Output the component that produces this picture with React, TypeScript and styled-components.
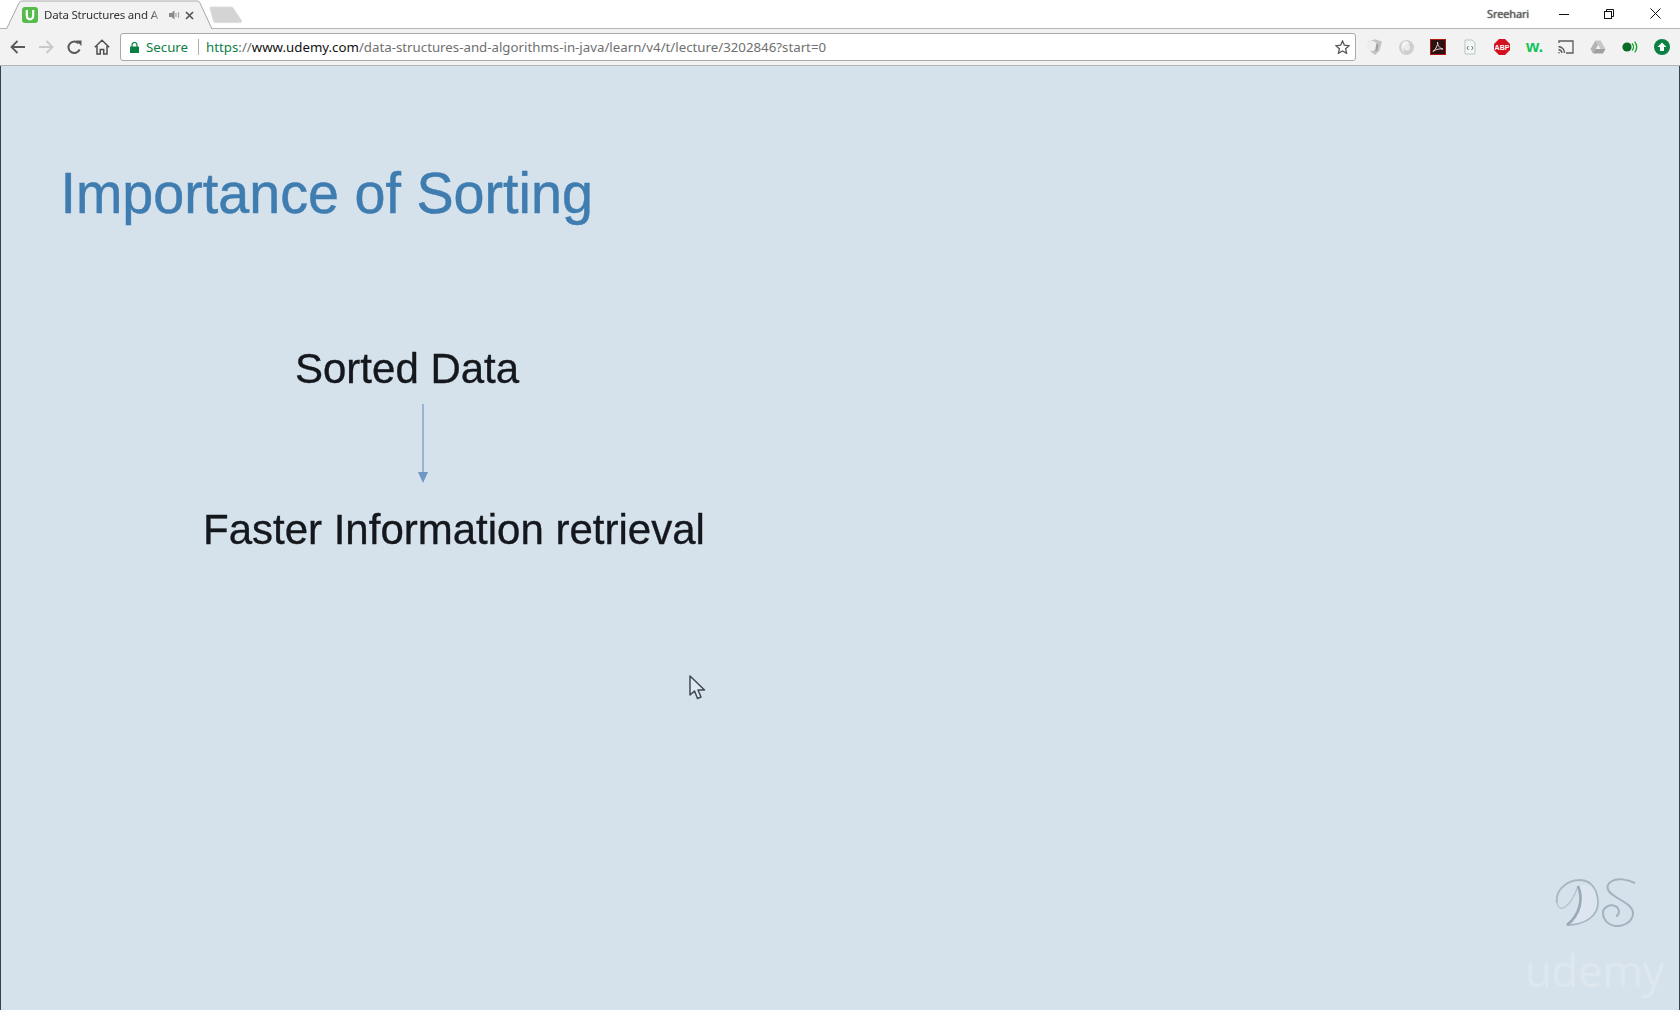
import React from "react";
import styled, { createGlobalStyle } from "styled-components";

const Global = createGlobalStyle`
  html, body { margin: 0; padding: 0; height: 100%; overflow: hidden; background: #d6e2eb; }
  #root { height: 100%; }
`;

const Page = styled.div`
  width: 1680px;
  height: 1010px;
  display: flex;
  flex-direction: column;
  font-family: "Noto Sans", "Open Sans", sans-serif;
`;

const TitleBar = styled.header`
  height: 28px;
  flex: none;
  background: #fff;
  border-bottom: 1px solid #b4b4b4;
  display: flex;
  align-items: flex-start;
  box-sizing: content-box;
  position: relative;
`;

const Tab = styled.div`
  width: 208px;
  height: 29px;
  margin-left: 5px;
  position: relative;
  display: flex;
  align-items: center;
  padding: 1px 0 0 17px;
  box-sizing: border-box;
  flex: none;
  z-index: 1;
`;

const TabShape = styled.svg`
  position: absolute;
  left: 0;
  top: 0;
`;

const Favicon = styled.svg`
  position: relative;
  flex: none;
`;

const TabTitle = styled.span`
  position: relative;
  width: 120px;
  margin-left: 6px;
  font-size: 11.5px;
  letter-spacing: -0.2px;
  line-height: 16px;
  white-space: nowrap;
  color: #333;
  -webkit-mask-image: linear-gradient(to right, #000 88%, transparent 100%);
  mask-image: linear-gradient(to right, #000 88%, transparent 100%);
`;

const TabIcon = styled.svg<{ $gap: number }>`
  position: relative;
  flex: none;
  margin-left: ${(p) => p.$gap}px;
`;

const NewTab = styled.svg`
  flex: none;
  margin: 6px 0 0 -4px;
`;

const Spacer = styled.div`
  flex: 1;
`;

const UserName = styled.span`
  font-size: 11px;
  line-height: 28px;
  color: #6a6a6a;
  letter-spacing: -0.15px;
  text-shadow: 0 0 1px #333;
  margin-right: 12px;
`;

const WindowButtons = styled.div`
  display: flex;
  height: 27px;
`;

const WindowButton = styled.div<{ $wide?: boolean }>`
  width: ${(p) => (p.$wide ? 49 : 45)}px;
  height: 27px;
  display: flex;
  align-items: center;
  justify-content: center;
`;

const Toolbar = styled.nav`
  height: 36px;
  flex: none;
  background: #f2f2f2;
  border-bottom: 1px solid #b4b4b4;
  display: flex;
  align-items: center;
`;

const NavGroup = styled.div`
  display: flex;
  width: 120px;
  flex: none;
  padding-left: 4px;
  box-sizing: border-box;
`;

const NavButton = styled.div`
  width: 28px;
  height: 28px;
  display: flex;
  align-items: center;
  justify-content: center;
`;

const Omnibox = styled.div`
  width: 1236px;
  height: 28px;
  flex: none;
  box-sizing: border-box;
  background: #fff;
  border: 1px solid #a9a9a9;
  border-radius: 3px;
  display: flex;
  align-items: center;
  padding: 0 5px 0 9px;
  font-size: 13.28px;
`;

const SecureLabel = styled.span`
  color: #0b8043;
  margin-left: 7px;
  line-height: 26px;
`;

const Divider = styled.span`
  width: 1px;
  height: 16px;
  background: #b0b0b0;
  margin: 0 7px 0 10px;
  flex: none;
`;

const Url = styled.div`
  flex: 1;
  white-space: nowrap;
  color: #707070;
`;

const UrlScheme = styled.span`
  color: #0b8043;
`;

const UrlHost = styled.span`
  color: #111;
`;

const Extensions = styled.div`
  display: flex;
  flex: none;
  margin-left: 2px;
`;

const ExtButton = styled.div`
  width: 32px;
  height: 28px;
  display: flex;
  align-items: center;
  justify-content: center;
`;

const Slide = styled.main`
  flex: 1;
  position: relative;
  background: #d6e2eb;
  border-left: 1px solid #39424a;
  border-right: 1px solid #39424a;
  overflow: hidden;
  font-family: "Liberation Sans", Arial, sans-serif;
  filter: blur(0.35px);
`;

const SlideTitle = styled.h1`
  margin: 0;
  padding: 92px 0 0 62px;
  font-size: 58px;
  line-height: 70px;
  font-weight: 400;
  color: #3f7cb0;
  white-space: nowrap;
  transform: scaleX(0.96);
  transform-origin: 0 0;
  -webkit-text-stroke: 0.5px #3f7cb0;
`;

const Diagram = styled.section`
  display: flex;
  flex-direction: column;
  margin-top: 116px;
`;

const SortedLabel = styled.div`
  margin-left: 294px;
  font-size: 42px;
  line-height: 50px;
  color: #14181d;
  white-space: nowrap;
  -webkit-text-stroke: 0.35px #14181d;
`;

const Arrow = styled.svg`
  display: block;
  margin: 10px 0 0 416px;
`;

const RetrievalLabel = styled.div`
  margin: 21px 0 0 202px;
  font-size: 42px;
  line-height: 52px;
  color: #14181d;
  white-space: nowrap;
  -webkit-text-stroke: 0.35px #14181d;
`;

const Cursor = styled.svg`
  position: absolute;
  left: 686px;
  top: 608px;
`;

const Watermark = styled.div`
  position: absolute;
  right: 15px;
  bottom: 12px;
  width: 142px;
  display: flex;
  flex-direction: column;
  align-items: flex-end;
`;

const DsLogo = styled.svg`
  display: block;
  margin: 0 25px 14px 0;
`;

const UdemyMark = styled.div`
  font-family: "Open Sans", sans-serif;
  font-size: 44px;
  line-height: 56px;
  color: #dfe7ee;
  letter-spacing: -0.5px;
`;

const AbpText = styled.text`
  font-family: "Liberation Sans", sans-serif;
  font-size: 7px;
  font-weight: 700;
  fill: #fff;
`;

const WText = styled.text`
  font-family: "Liberation Sans", sans-serif;
  font-size: 17px;
  font-weight: 700;
  fill: #10c45a;
`;

const Extension = ({ kind }: { kind: string }) => {
  switch (kind) {
    case "shield":
      return (
        <svg width="18" height="18" viewBox="0 0 16 16">
          <path d="M3 3 L9 1 L15 3 L13 11 L9 15 L5 12 Z" fill="#c4c4c4" />
          <circle cx="6" cy="7" r="4.6" fill="#eeeeee" />
          <path d="M10 5 L12 6 L11 11 L9 12 Z" fill="#a0a0a0" />
        </svg>
      );
    case "swirl":
      return (
        <svg width="17" height="17" viewBox="0 0 17 17">
          <circle cx="8.5" cy="8.5" r="7.5" fill="#cfcfcf" />
          <path d="M8 2 C3 3 2 9 6 14 C4 8 7 5 12 5 C10.5 3.5 9.5 2.5 8 2 Z" fill="#f4f4f4" />
          <circle cx="9" cy="8.5" r="3" fill="#ececec" />
        </svg>
      );
    case "pdf":
      return (
        <svg width="16" height="16" viewBox="0 0 16 16">
          <rect x="0.5" y="0.5" width="15" height="15" fill="#2a1212" stroke="#b3180f" />
          <path d="M3 12.5 C6 10 8 6 7.6 3 C7.4 6 9.5 9.5 13 10 C10 9.6 6 10 3 12.5 Z" fill="none" stroke="#e9d5d2" strokeWidth="1" />
        </svg>
      );
    case "doc":
      return (
        <svg width="14" height="16" viewBox="0 0 14 16">
          <path d="M2 1 H9 L12 4 V15 H2 Z" fill="#f3f6f6" stroke="#b9c4c4" />
          <path d="M5.5 7 L4 9 L5.5 11 M8.5 7 L10 9 L8.5 11" fill="none" stroke="#6b7a7a" />
        </svg>
      );
    case "abp":
      return (
        <svg width="16" height="16" viewBox="0 0 16 16">
          <path d="M5 0 H11 L16 5 V11 L11 16 H5 L0 11 V5 Z" fill="#d3101f" />
          <AbpText x="8" y="10.6" textAnchor="middle">ABP</AbpText>
        </svg>
      );
    case "w":
      return (
        <svg width="26" height="20" viewBox="0 0 26 20">
          <WText x="5" y="15">w.</WText>
        </svg>
      );
    case "cast":
      return (
        <svg width="16" height="14" viewBox="0 0 16 14" fill="none" stroke="#5c5c5c" strokeWidth="1.3">
          <path d="M1 3 V1 H15 V13 H8" />
          <path d="M0.5 6.5 A7 7 0 0 1 6.5 13" />
          <path d="M0.5 9.5 A4 4 0 0 1 4 13" />
          <circle cx="1" cy="12.8" r="0.8" fill="#5c5c5c" stroke="none" />
        </svg>
      );
    case "drive":
      return (
        <svg width="16" height="14" viewBox="0 0 16 14">
          <path d="M5.5 0.5 H10.5 L15.5 9 H10.5 Z" fill="#c6c6c6" />
          <path d="M5.5 0.5 L8 5 L3 13.5 L0.5 9 Z" fill="#b3b3b3" />
          <path d="M5.5 9 H15.5 L13 13.5 H3 Z" fill="#a0a0a0" />
        </svg>
      );
    case "signal":
      return (
        <svg width="16" height="14" viewBox="0 0 16 14" fill="none">
          <circle cx="5" cy="7" r="4.6" fill="#0a6b27" />
          <path d="M10 3.5 A5 5 0 0 1 10 10.5" stroke="#15a52f" strokeWidth="1.4" />
          <path d="M12.6 1.6 A8 8 0 0 1 12.6 12.4" stroke="#15a52f" strokeWidth="1.4" />
        </svg>
      );
    default:
      return (
        <svg width="16" height="16" viewBox="0 0 16 16">
          <circle cx="8" cy="8" r="8" fill="#0b8043" />
          <path d="M8 3.5 L12.5 8 H10 V12 H6 V8 H3.5 Z" fill="#fff" />
        </svg>
      );
  }
};

const extensionKinds = ["shield", "swirl", "pdf", "doc", "abp", "w", "cast", "drive", "signal", "up"];

export default function App() {
  return (
    <Page>
      <Global />
      <TitleBar>
        <Tab>
          <TabShape width="208" height="29" viewBox="0 0 208 29">
            <path d="M1.5 29 L14 3 Q15 1 17 1 H192 Q194 1 195 3 L207 29" fill="#f2f2f2" stroke="#a8a8a8" />
          </TabShape>
          <Favicon width="16" height="16" viewBox="0 0 16 16">
            <rect width="16" height="16" rx="3" fill="#55bb4a" />
            <path d="M4.8 3 V8.6 C4.8 11 6.2 12.3 8 12.3 C9.8 12.3 11.2 11 11.2 8.6 V3" fill="none" stroke="#fff" strokeWidth="2.2" />
          </Favicon>
          <TabTitle>Data Structures and A</TabTitle>
          <TabIcon $gap={5} width="11" height="10" viewBox="0 0 11 10">
            <path d="M0 3 H2.5 L5.5 0.5 V9.5 L2.5 7 H0 Z" fill="#8a8a8a" />
            <path d="M7 3 V7 M9.5 2 V8" stroke="#a5a5a5" strokeWidth="1.2" />
          </TabIcon>
          <TabIcon $gap={5} width="9" height="9" viewBox="0 0 9 9">
            <path d="M1 1 L8 8 M8 1 L1 8" stroke="#555" strokeWidth="1.7" />
          </TabIcon>
        </Tab>
        <NewTab width="34" height="19" viewBox="0 0 36 19">
          <path d="M1 1.5 Q1 0.5 2 0.5 H24 Q25 0.5 25.5 1.5 L34.5 15 Q35 17 33 17 H7 Q5.5 17 5 16 Z" fill="#d4d4d4" stroke="#dcdcdc" />
        </NewTab>
        <Spacer />
        <UserName>Sreehari</UserName>
        <WindowButtons>
          <WindowButton>
            <svg width="10" height="10" viewBox="0 0 10 10"><path d="M0 5.5 H10" stroke="#111" /></svg>
          </WindowButton>
          <WindowButton>
            <svg width="10" height="10" viewBox="0 0 10 10" fill="none" stroke="#111">
              <rect x="0.5" y="2.5" width="7" height="7" />
              <path d="M2.5 2.5 V0.5 H9.5 V7.5 H7.5" />
            </svg>
          </WindowButton>
          <WindowButton $wide>
            <svg width="11" height="11" viewBox="0 0 11 11"><path d="M0.5 0.5 L10.5 10.5 M10.5 0.5 L0.5 10.5" stroke="#111" /></svg>
          </WindowButton>
        </WindowButtons>
      </TitleBar>
      <Toolbar>
        <NavGroup>
          <NavButton>
            <svg width="16" height="14" viewBox="0 0 16 14" fill="none" stroke="#5a5a5a" strokeWidth="1.8">
              <path d="M15 7 H2 M7.5 1 L1.5 7 L7.5 13" />
            </svg>
          </NavButton>
          <NavButton>
            <svg width="16" height="14" viewBox="0 0 16 14" fill="none" stroke="#c8c8c8" strokeWidth="1.8">
              <path d="M1 7 H14 M8.5 1 L14.5 7 L8.5 13" />
            </svg>
          </NavButton>
          <NavButton>
            <svg width="15" height="15" viewBox="0 0 15 15" fill="none">
              <path d="M12.6 9.5 A5.8 5.8 0 1 1 11.6 3.4" stroke="#5a5a5a" strokeWidth="2" />
              <path d="M9 0.5 H14.5 V6 Z" fill="#5a5a5a" />
            </svg>
          </NavButton>
          <NavButton>
            <svg width="16" height="16" viewBox="0 0 16 16" fill="none" stroke="#4e4e4e" strokeWidth="1.5">
              <path d="M0.8 8.2 L8 1.2 L15.2 8.2 M3 7 V15 H6.3 V10.5 H9.7 V15 H13 V7" />
            </svg>
          </NavButton>
        </NavGroup>
        <Omnibox>
          <svg width="9" height="11" viewBox="0 0 9 11">
            <rect y="4.5" width="9" height="6.5" rx="0.5" fill="#0b8043" />
            <path d="M2 5 V3 A2.5 2.5 0 0 1 7 3 V5" fill="none" stroke="#0b8043" strokeWidth="1.2" />
          </svg>
          <SecureLabel>Secure</SecureLabel>
          <Divider />
          <Url>
            <UrlScheme>https</UrlScheme>://<UrlHost>www.udemy.com</UrlHost>/data-structures-and-algorithms-in-java/learn/v4/t/lecture/3202846?start=0
          </Url>
          <svg width="15" height="14" viewBox="0 0 15 14">
            <path d="M7.5 1 L9.4 5.2 L14 5.7 L10.6 8.8 L11.6 13.3 L7.5 11 L3.4 13.3 L4.4 8.8 L1 5.7 L5.6 5.2 Z" fill="none" stroke="#555" strokeWidth="1.3" />
          </svg>
        </Omnibox>
        <Extensions>
          {extensionKinds.map((k) => (
            <ExtButton key={k}>
              <Extension kind={k} />
            </ExtButton>
          ))}
        </Extensions>
      </Toolbar>
      <Slide>
        <SlideTitle>Importance of Sorting</SlideTitle>
        <Diagram>
          <SortedLabel>Sorted Data</SortedLabel>
          <Arrow width="12" height="79" viewBox="0 0 12 79">
            <path d="M6 0 V69" stroke="#6f97c4" strokeWidth="1.2" />
            <path d="M1 68 H11 L6 79 Z" fill="#6f97c4" />
          </Arrow>
          <RetrievalLabel>Faster Information retrieval</RetrievalLabel>
        </Diagram>
        <Cursor width="20" height="28" viewBox="0 0 20 28">
          <path d="M3 2 V21 L7.5 17 L10.5 24.5 L14 23 L11 16 L17.5 16 Z" fill="#dfe8ef" stroke="#3f4a54" strokeWidth="1.5" strokeLinejoin="round" />
        </Cursor>
        <Watermark>
          <DsLogo width="84" height="50" viewBox="0 0 84 50" fill="none">
            <path d="M23 8 C28 20 26 36 12 47 C30 47 43 38 43 25 C43 13 37 5 23 8 Z" fill="#dde6f0" />
            <path d="M2 25 C0 14 10 2 25 2 C37 2 43 13 43 25 C43 38 30 47 12 47" stroke="#a8b6c2" strokeWidth="1.8" />
            <path d="M2 25 C3 30 6 32 10 29 C16 25 20 17 23 8" stroke="#b4c1cb" strokeWidth="1.2" />
            <path d="M23 8 C28 20 26 36 12 47" stroke="#98a8b5" strokeWidth="2.6" />
            <path d="M80 5 C72 1 62 0 57 3 C50 7 52 13 58 17 C66 23 78 27 78 35 C78 43 70 48 62 48 C54 48 48 42 48 35 C48 29 55 26 60 28 C65 30 65 37 61 38" stroke="#a3b2be" strokeWidth="2" />
          </DsLogo>
          <UdemyMark>udemy</UdemyMark>
        </Watermark>
      </Slide>
    </Page>
  );
}
